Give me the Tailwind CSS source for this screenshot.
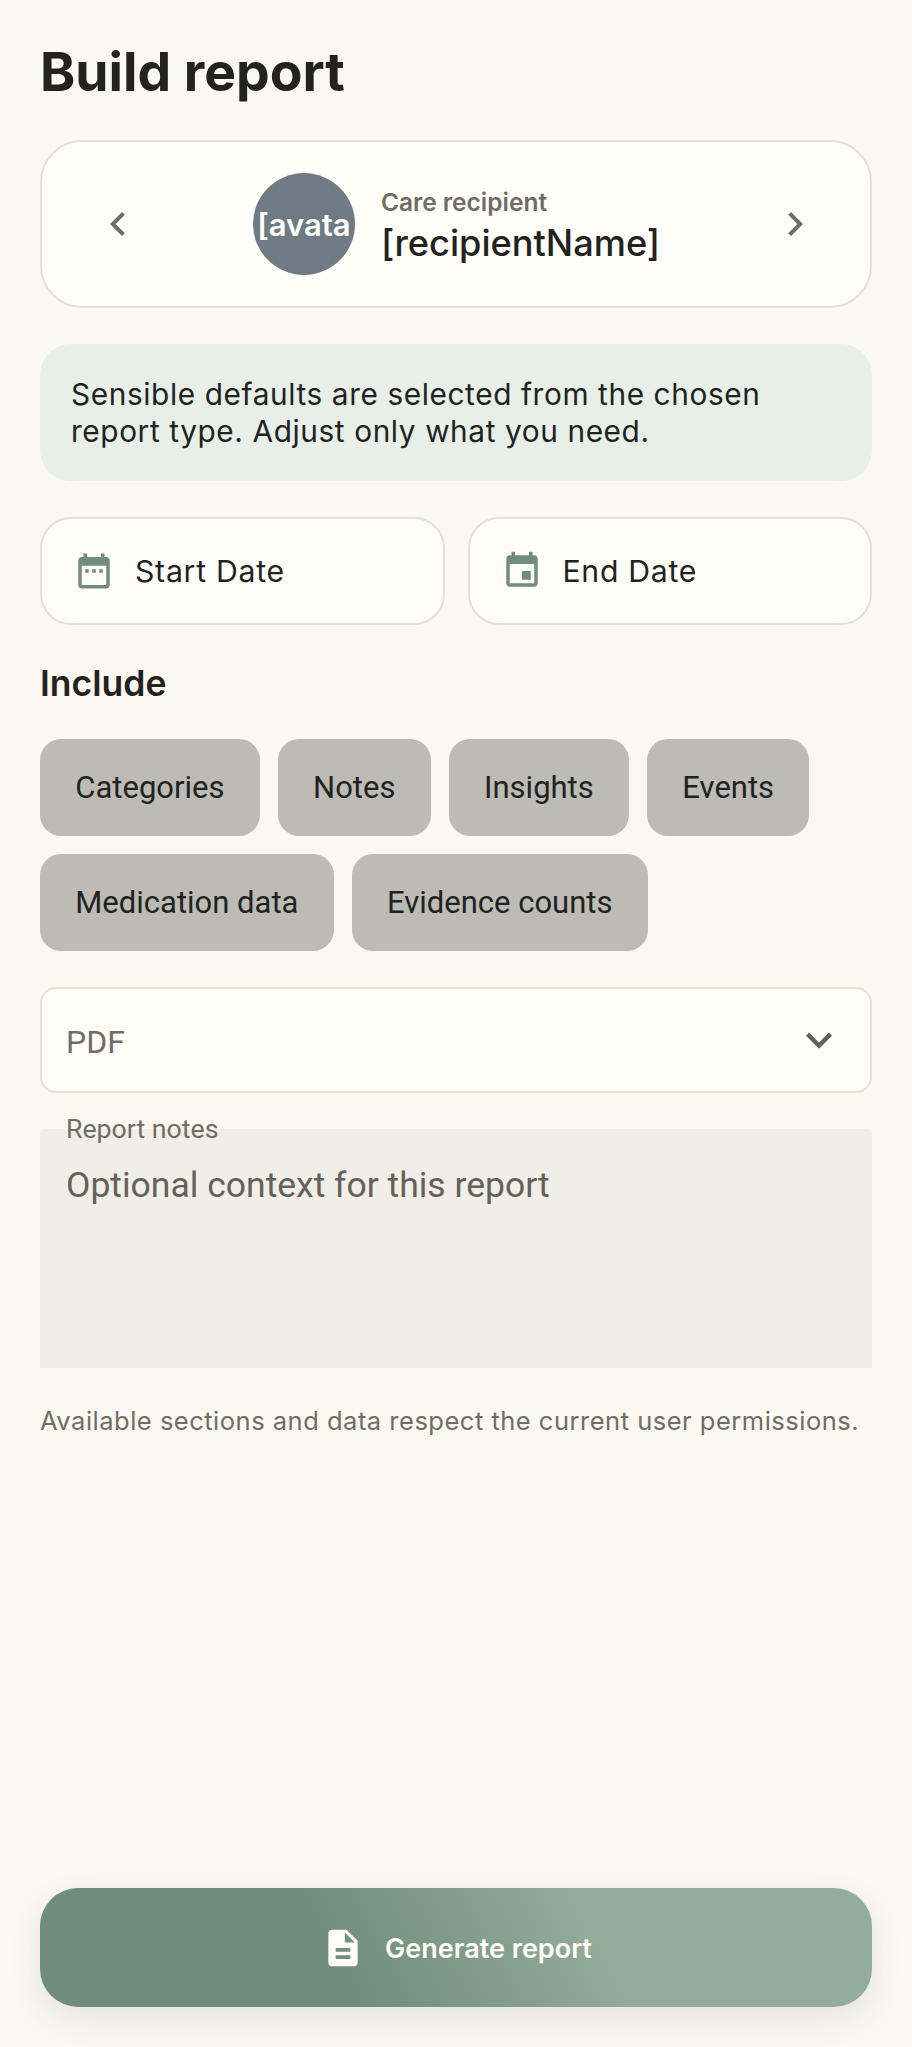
<!DOCTYPE html>
<html lang="en">
<head>
    <meta charset="UTF-8">
    <meta name="viewport" content="width=device-width, initial-scale=1.0">
    <title>Build report</title>
    <script src="https://cdn.jsdelivr.net/npm/@tailwindcss/browser@4"></script>
</head>
<body class="bg-[#faf8f0] font-['Inter',sans-serif] text-[#22221f]">
    <div class="h-[2047px] flex flex-col px-10 relative overflow-hidden">
        <!-- Title -->
        <h1 class="mt-[37px] h-[70px] text-[53.4px] leading-[70px] font-bold">Build report</h1>

        <!-- Recipient switcher -->
        <div class="mt-[33px] h-[168px] flex items-center justify-between pl-[52px] pr-[51px] bg-[#fffdf7] border-2 border-[#e4e0d6] rounded-[42px]">
            <svg class="w-12 h-12 text-[#6f6d66]" viewBox="0 0 24 24" fill="currentColor"><path d="M15.41 7.41 14 6l-6 6 6 6 1.41-1.41L10.83 12z"/></svg>
            <div class="flex items-center gap-[26px]">
                <div class="w-[102px] h-[102px] rounded-full bg-[#6f7b83] flex items-center justify-center overflow-hidden">
                    <span class="pt-[2px] text-[31px] font-semibold text-[#fffdf8] whitespace-nowrap">[avata</span>
                </div>
                <div class="flex flex-col pt-[4px]">
                    <span class="text-[24.5px] leading-[32px] font-semibold text-[#6f6d66]">Care recipient</span>
                    <span class="mt-[2px] text-[36.2px] leading-[46px] font-medium">[recipientName]</span>
                </div>
            </div>
            <svg class="w-12 h-12 text-[#6f6d66]" viewBox="0 0 24 24" fill="currentColor"><path d="M10 6 8.59 7.41 13.17 12l-4.58 4.59L10 18l6-6z"/></svg>
        </div>

        <!-- Hint -->
        <div class="mt-[36px] h-[137px] pl-[31px] pr-[50px] pt-[1px] flex items-center bg-[#e7efe8] rounded-[31px]">
            <p class="text-[29.8px] leading-[37px] tracking-[0.6px]">Sensible defaults are selected from the chosen report type. Adjust only what you need.</p>
        </div>

        <!-- Dates -->
        <div class="mt-[36px] grid grid-cols-2 gap-[23px]">
            <div class="h-[108px] pl-[31px] flex items-center gap-[20px] bg-[#fffdf7] border-2 border-[#e4e0d6] rounded-[31px]">
                <svg class="w-[42px] h-[42px] text-[#6f8d78]" viewBox="0 0 24 24" fill="currentColor"><path d="M9 11H7v2h2v-2zm4 0h-2v2h2v-2zm4 0h-2v2h2v-2zm2-7h-1V2h-2v2H8V2H6v2H5c-1.11 0-2 .9-2 2v14c0 1.1.89 2 2 2h14c1.1 0 2-.9 2-2V6c0-1.1-.9-2-2-2zm0 16H5V9h14v11z"/></svg>
                <span class="pt-[2px] text-[30.2px] tracking-[0.75px]">Start Date</span>
            </div>
            <div class="h-[108px] pl-[31px] flex items-center gap-[20px] bg-[#fffdf7] border-2 border-[#e4e0d6] rounded-[31px]">
                <svg class="w-[42px] h-[42px] text-[#6f8d78]" viewBox="0 0 24 24" fill="currentColor"><path d="M17 12h-5v5h5v-5zM16 1v2H8V1H6v2H5c-1.11 0-2 .9-2 2v14c0 1.1.89 2 2 2h14c1.1 0 2-.9 2-2V5c0-1.1-.9-2-2-2h-1V1h-2zm3 18H5V8h14v11z"/></svg>
                <span class="pt-[2px] text-[30.2px] tracking-[0.7px]">End Date</span>
            </div>
        </div>

        <!-- Include -->
        <h2 class="mt-[37px] h-[46px] text-[35.5px] leading-[44px] font-semibold">Include</h2>
        <div class="mt-[31px] flex flex-wrap gap-x-[18px] gap-y-[18px] font-['Roboto',sans-serif] text-[31px]">
            <div class="h-[97px] px-[35.3px] pt-[2px] flex items-center bg-[#bcbbb5] rounded-[21px]">Categories</div>
            <div class="h-[97px] px-[35.3px] pt-[2px] flex items-center bg-[#bcbbb5] rounded-[21px]">Notes</div>
            <div class="h-[97px] px-[35.3px] pt-[2px] flex items-center bg-[#bcbbb5] rounded-[21px]">Insights</div>
            <div class="h-[97px] px-[35.3px] pt-[2px] flex items-center bg-[#bcbbb5] rounded-[21px]">Events</div>
            <div class="h-[97px] px-[35.3px] pt-[2px] flex items-center bg-[#bcbbb5] rounded-[21px]">Medication data</div>
            <div class="h-[97px] px-[35.3px] pt-[2px] flex items-center bg-[#bcbbb5] rounded-[21px]">Evidence counts</div>
        </div>

        <!-- Format select -->
        <div class="mt-9 h-[106px] pl-[24px] pr-[25px] flex items-center justify-between bg-[#fffdf7] border-2 border-[#e4e0d6] rounded-[16px] font-['Roboto',sans-serif]">
            <span class="pt-[4px] text-[32px] text-[#6f6d66]">PDF</span>
            <svg class="w-[52px] h-[52px] text-[#63615b]" viewBox="0 0 24 24" fill="currentColor"><path d="M16.59 8.59 12 13.17 7.41 8.59 6 10l6 6 6-6z"/></svg>
        </div>

        <!-- Notes -->
        <div class="mt-9 h-[239px] relative bg-[#f0eee7] rounded-t-[5px] font-['Roboto',sans-serif]">
            <span class="absolute left-[26px] top-[-15px] text-[26.7px] leading-[30px] text-[#6f6d66]">Report notes</span>
            <p class="pl-[26px] pt-[34px] text-[35.5px] leading-[44px] text-[#63615b]">Optional context for this report</p>
        </div>

        <p class="mt-[36px] text-[25.5px] leading-[34px] tracking-[0.5px] text-[#6f6d66]">Available sections and data respect the current user permissions.</p>

        <!-- Action -->
        <button class="mt-auto mb-[40px] h-[119px] pl-[1px] flex items-center justify-center gap-[20px] bg-[linear-gradient(61deg,#6f8d78_35%,#92ad9b_67%)] rounded-[38px] shadow-[0_12px_32px_rgba(60,70,50,0.10)] text-[#fffdf8]">
            <svg class="w-[44px] h-[44px]" viewBox="0 0 24 24" fill="currentColor"><path d="M14 2H6c-1.1 0-1.99.9-1.99 2L4 20c0 1.1.89 2 1.99 2H18c1.1 0 2-.9 2-2V8l-6-6zm2 16H8v-2h8v2zm0-4H8v-2h8v2zm-3-5V3.5L18.5 9H13z"/></svg>
            <span class="pt-[3px] text-[27px] font-semibold">Generate report</span>
        </button>
    </div>
</body>
</html>
